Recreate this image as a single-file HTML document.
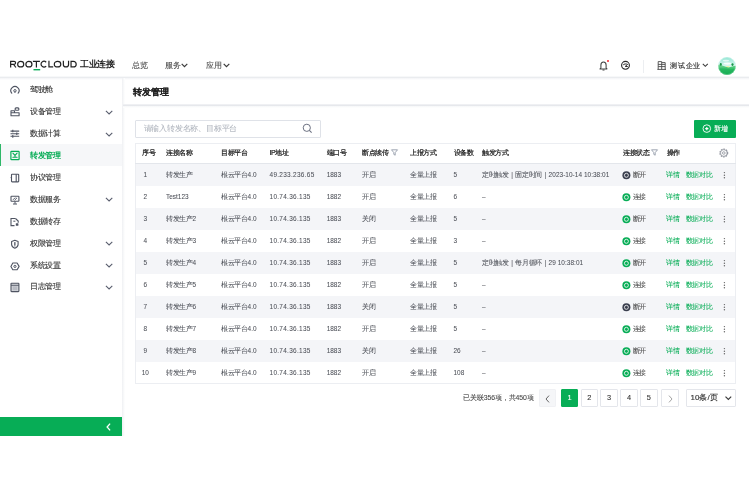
<!DOCTYPE html>
<html><head><meta charset="utf-8"><style>
*{box-sizing:border-box;margin:0;padding:0}
html,body{width:749px;height:499px;overflow:hidden;background:#fff;font-family:"Liberation Sans",sans-serif;color:#333}
div{position:absolute;white-space:nowrap}
.c{letter-spacing:-0.35px;font-size:7px}
svg{position:absolute;overflow:visible}
.nav{font-size:8px;letter-spacing:-0.45px;color:#4a4a4a;-webkit-text-stroke:0.1px;line-height:10px}
.mi{font-size:8px;letter-spacing:-0.4px;color:#333;-webkit-text-stroke:0.12px;line-height:10px;left:30px}
.th{font-size:7px;letter-spacing:-0.4px;color:#1f1f1f;-webkit-text-stroke:0.22px;line-height:10px}
.td{font-size:6.45px;color:#4d5058;-webkit-text-stroke:0.05px;line-height:10px}
.ip{letter-spacing:0.3px}
.trig{letter-spacing:0.05px}
.bar{margin-right:0.6px;margin-left:0.7px}
.pg{width:17.5px;height:17.4px;border:1px solid #e4e6eb;border-radius:1px;background:#fff;font-size:7.4px;-webkit-text-stroke:0.1px;color:#333;text-align:center;line-height:15.4px}
</style></head><body>
<div id="w" style="left:0;top:0;width:749px;height:499px;will-change:transform">
<div style="left:0;top:76px;width:749px;height:1px;background:#f7f8f9"></div>
<div style="left:0;top:77px;width:749px;height:1px;background:#eaecef"></div>
<div style="left:0;top:78px;width:749px;height:2px;background:linear-gradient(#f3f4f6,#fff)"></div>
<svg style="left:8px;top:58px" width="72" height="14" viewBox="0 0 72 14"><g fill="none" stroke="#222" stroke-width="1.2"><path d="M2.65 9.5 V3.35 H6.1 A1.475 1.475 0 0 1 6.1 6.3 H2.65 M5.6 6.3 L7.9 9.5"/><ellipse cx="12.7" cy="6.15" rx="3.05" ry="2.8"/><ellipse cx="20.9" cy="6.15" rx="3.05" ry="2.8"/><path d="M24.9 3.35 H31.9 M28.4 3.35 V9.5"/><path d="M38.2 4.2 A3.0 2.8 0 1 0 38.2 8.1"/><path d="M40.95 2.8 V8.95 H45.2"/><ellipse cx="49.55" cy="6.15" rx="3.25" ry="2.8"/><path d="M55.35 2.8 V6.4 A2.6 2.55 0 0 0 60.55 6.4 V2.8"/><path d="M63.05 3.35 V8.95 H65.4 A2.8 2.8 0 0 0 65.4 3.35 Z"/></g><rect x="25.5" y="11" width="6.7" height="1.4" fill="#07ad56"/></svg>
<div style="left:80px;top:59px;font-size:8.6px;letter-spacing:-0.3px;line-height:10px;color:#1a1a1a;font-weight:bold">工业连接</div>
<div class="nav" style="left:132px;top:61px">总览</div>
<div class="nav" style="left:165px;top:61px">服务</div>
<svg style="left:181px;top:62.8px" width="7" height="5" viewBox="0 0 7 5"><path d="M0.7 0.9 L3.5 3.7 L6.3 0.9" fill="none" stroke="#3a3a3a" stroke-width="1.2"/></svg>
<div class="nav" style="left:206px;top:61px">应用</div>
<svg style="left:222.5px;top:62.8px" width="7" height="5" viewBox="0 0 7 5"><path d="M0.7 0.9 L3.5 3.7 L6.3 0.9" fill="none" stroke="#3a3a3a" stroke-width="1.2"/></svg>
<svg style="left:599px;top:60.5px" width="9" height="10" viewBox="0 0 9 10"><path d="M1 7.9 L1.9 7 V4 C1.9 2.2 3 0.9 4.5 0.9 C6 0.9 7.1 2.2 7.1 4 V7 L8 7.9 Z" fill="none" stroke="#444" stroke-width="1.05" stroke-linejoin="round"/><path d="M3.5 9 H5.5" stroke="#444" stroke-width="1"/></svg>
<div style="left:606.8px;top:60px;width:2.2px;height:2.2px;border-radius:50%;background:#f5222d"></div>
<svg style="left:621px;top:61px" width="9" height="9" viewBox="0 0 9 9"><circle cx="4.5" cy="4.3" r="3.9" fill="none" stroke="#2a2a2a" stroke-width="1.15"/><path d="M2.2 3.9 C3 2.9 5.2 2.6 6.6 3.4" fill="none" stroke="#2a2a2a" stroke-width="1"/><path d="M6.6 3.4 L4.2 5.4 L6.8 5.6" fill="none" stroke="#2a2a2a" stroke-width="1"/></svg>
<div style="left:643px;top:59.5px;width:1px;height:13px;background:#eceef1"></div>
<svg style="left:656.5px;top:61px" width="10" height="10" viewBox="0 0 10 10"><path d="M0.4 8.4 H9 M1.2 8.4 V0.6 H4.7 V8.4 M4.7 1.6 H8.2 V8.4 M1.2 3.4 H8.2 M1.2 5.6 H8.2" fill="none" stroke="#4a4a4a" stroke-width="0.9"/></svg>
<div class="nav" style="left:670px;top:60.5px;color:#333;font-size:7px;letter-spacing:0.75px;-webkit-text-stroke:0.15px">测试企业</div>
<svg style="left:701.5px;top:63.3px" width="7" height="5" viewBox="0 0 7 5"><path d="M0.8 0.9 L3.3 3.3 L5.8 0.9" fill="none" stroke="#3a3a3a" stroke-width="1.1"/></svg>
<svg style="left:718px;top:56.8px" width="18" height="18" viewBox="0 0 18 18"><defs><clipPath id="ac"><circle cx="9" cy="9" r="8.9"/></clipPath><linearGradient id="sky" x1="0" y1="0" x2="0" y2="1"><stop offset="0" stop-color="#93e6d4"/><stop offset="0.5" stop-color="#d6f6ee"/></linearGradient><linearGradient id="hill" x1="0" y1="0" x2="0" y2="1"><stop offset="0" stop-color="#7ad99a"/><stop offset="0.35" stop-color="#3cc46e"/><stop offset="1" stop-color="#10a84e"/></linearGradient></defs><g clip-path="url(#ac)"><rect width="18" height="18" fill="url(#sky)"/><ellipse cx="8" cy="3.6" rx="3.2" ry="0.9" fill="#fff" opacity="0.65"/><ellipse cx="9.5" cy="6.6" rx="4" ry="1.1" fill="#fff" opacity="0.85"/><ellipse cx="9.8" cy="10" rx="2" ry="1" fill="#eef0a0"/><path d="M0 7.8 C3 7.3 6 9.5 9.5 10.3 C12.5 10.9 15 8.6 18 8.8 V18 H0 Z" fill="url(#hill)"/><path d="M0 12 C5 10.6 10 13.5 18 11.5 V18 H0Z" fill="#1bb158" opacity="0.55"/><ellipse cx="2.8" cy="7.4" rx="1" ry="1.3" fill="#179646"/><ellipse cx="14.5" cy="7.6" rx="1.1" ry="1.4" fill="#179646"/></g><circle cx="9" cy="9" r="8.6" fill="none" stroke="#fff" stroke-width="0.5" opacity="0.5"/></svg>
<div style="left:122px;top:78px;width:3px;height:358px;background:linear-gradient(90deg,#eff0f3,#f7f8f9 50%,#fff)"></div>
<div class="mi" style="top:84.9px">驾驶舱</div>
<svg style="left:9.5px;top:85.9px" width="10" height="10" viewBox="0 0 10 10"><path d="M1.75 7.2 A4.1 4.1 0 1 1 8.15 7.2" fill="none" stroke="#4f5462" stroke-width="1.1" stroke-linecap="round"/><circle cx="4.95" cy="4.75" r="1.2" fill="none" stroke="#4f5462" stroke-width="1"/><path d="M4.95 5.9 V6.9" stroke="#4f5462" stroke-width="0.9"/></svg>
<div class="mi" style="top:106.9px">设备管理</div>
<svg style="left:9.5px;top:107.9px" width="10" height="10" viewBox="0 0 10 10"><path d="M1 7.8 V2.8 H4.5 V4.8 H9.1 V7.8 Z M1 4.8 H4.5" fill="none" stroke="#4f5462" stroke-width="1.1" stroke-linejoin="round"/><rect x="5.1" y="-0.1" width="3.8" height="2.3" rx="1" fill="none" stroke="#4f5462" stroke-width="1.1"/></svg>
<svg style="left:104.5px;top:109.5px" width="8" height="5" viewBox="0 0 8 5"><path d="M0.9 0.8 L4.1 3.9 L7.3 0.8" fill="none" stroke="#5a5e6e" stroke-width="1.1"/></svg>
<div class="mi" style="top:128.8px">数据计算</div>
<svg style="left:9.5px;top:129.8px" width="10" height="10" viewBox="0 0 10 10"><path d="M0.5 1.1 H9.2 M0.5 3.8 H9.2 M0.5 6.3 H9.2 M2.8 -0.2 V2.3 M6.8 2.6 V5 M2.8 5 V7.8" fill="none" stroke="#4f5462" stroke-width="1.1"/></svg>
<svg style="left:104.5px;top:131.5px" width="8" height="5" viewBox="0 0 8 5"><path d="M0.9 0.8 L4.1 3.9 L7.3 0.8" fill="none" stroke="#5a5e6e" stroke-width="1.1"/></svg>
<div style="left:0;top:144px;width:122px;height:22px;background:#f6f7f9"></div>
<div style="left:0;top:144px;width:1.3px;height:22px;background:#2fb768"></div>
<div class="mi" style="top:150.7px;color:#07ad56;font-weight:bold;-webkit-text-stroke:0">转发管理</div>
<svg style="left:9.5px;top:151.7px" width="10" height="10" viewBox="0 0 10 10"><rect x="0.9" y="-0.7" width="8.2" height="8.3" rx="0.6" fill="none" stroke="#07ad56" stroke-width="1.2"/><path d="M2.9 1.2 L5 3.4 L7.1 1.2 M5 3.4 V4.6 M2.9 5.3 H7.1" fill="none" stroke="#07ad56" stroke-width="1.1" stroke-linecap="round"/></svg>
<div class="mi" style="top:172.7px">协议管理</div>
<svg style="left:9.5px;top:173.7px" width="10" height="10" viewBox="0 0 10 10"><rect x="1.5" y="0.2" width="7.2" height="7.7" rx="0.6" fill="none" stroke="#4f5462" stroke-width="1.1"/><path d="M6.2 0.2 V7.9" stroke="#4f5462" stroke-width="1.1"/><path d="M0.6 3.6 H1.8" stroke="#4f5462" stroke-width="0.9"/></svg>
<div class="mi" style="top:194.7px">数据服务</div>
<svg style="left:9.5px;top:195.7px" width="10" height="10" viewBox="0 0 10 10"><rect x="1" y="0.3" width="7.9" height="5" rx="0.5" fill="none" stroke="#4f5462" stroke-width="1.1"/><path d="M3 3.8 L5.2 1.6 M4.6 4.2 L7 1.8 M5 5.3 V7.8 M3 8 H7" fill="none" stroke="#4f5462" stroke-width="1"/></svg>
<svg style="left:104.5px;top:197.3px" width="8" height="5" viewBox="0 0 8 5"><path d="M0.9 0.8 L4.1 3.9 L7.3 0.8" fill="none" stroke="#5a5e6e" stroke-width="1.1"/></svg>
<div class="mi" style="top:216.6px">数据转存</div>
<svg style="left:9.5px;top:217.6px" width="10" height="10" viewBox="0 0 10 10"><path d="M5.5 0.5 H1 V7.6 H4.5" fill="none" stroke="#4f5462" stroke-width="1.1"/><path d="M5.5 0.5 L8.2 3.1 V4.8" fill="none" stroke="#4f5462" stroke-width="1.1"/><path d="M3.3 3.2 H5.4" stroke="#4f5462" stroke-width="1"/><rect x="5.8" y="5.2" width="2.6" height="2.6" rx="0.6" fill="#4f5462"/></svg>
<div class="mi" style="top:238.5px">权限管理</div>
<svg style="left:9.5px;top:239.5px" width="10" height="10" viewBox="0 0 10 10"><path d="M4.85 0.2 L8.1 1.5 V4.6 C8.1 6.4 6.7 7.6 4.85 8.2 C3 7.6 1.6 6.4 1.6 4.6 V1.5 Z" fill="none" stroke="#4f5462" stroke-width="1.1" stroke-linejoin="round"/><path d="M4.85 2.6 V5" stroke="#4f5462" stroke-width="1.3" stroke-linecap="round"/><circle cx="4.85" cy="6" r="0.55" fill="#4f5462"/></svg>
<svg style="left:104.5px;top:241.2px" width="8" height="5" viewBox="0 0 8 5"><path d="M0.9 0.8 L4.1 3.9 L7.3 0.8" fill="none" stroke="#5a5e6e" stroke-width="1.1"/></svg>
<div class="mi" style="top:260.5px">系统设置</div>
<svg style="left:9.5px;top:261.5px" width="10" height="10" viewBox="0 0 10 10"><path d="M2.8 1 H7.1 L9.1 4.4 L7.1 7.8 H2.8 L0.9 4.4 Z" fill="none" stroke="#4f5462" stroke-width="1.1" stroke-linejoin="round"/><circle cx="4.95" cy="4.4" r="1.1" fill="none" stroke="#4f5462" stroke-width="1"/></svg>
<svg style="left:104.5px;top:263.2px" width="8" height="5" viewBox="0 0 8 5"><path d="M0.9 0.8 L4.1 3.9 L7.3 0.8" fill="none" stroke="#5a5e6e" stroke-width="1.1"/></svg>
<div class="mi" style="top:282.4px">日志管理</div>
<svg style="left:9.5px;top:283.4px" width="10" height="10" viewBox="0 0 10 10"><rect x="1" y="0.3" width="7.9" height="8.3" rx="0.6" fill="#d5d7dc" stroke="#4f5462" stroke-width="1.1"/><path d="M1 2.3 H8.9" stroke="#4f5462" stroke-width="0.9"/><rect x="2.6" y="3.3" width="4.7" height="4" fill="#b9bcc4"/></svg>
<svg style="left:104.5px;top:285.1px" width="8" height="5" viewBox="0 0 8 5"><path d="M0.9 0.8 L4.1 3.9 L7.3 0.8" fill="none" stroke="#5a5e6e" stroke-width="1.1"/></svg>
<div style="left:0;top:417px;width:122px;height:19px;background:#07ad56"></div>
<svg style="left:106px;top:423px" width="5" height="8" viewBox="0 0 5 8"><path d="M4.1 0.6 L1.1 4 L4.1 7.4" fill="none" stroke="#fff" stroke-width="1.3"/></svg>
<div style="left:133.3px;top:86.5px;font-size:8.9px;line-height:10px;font-weight:bold;color:#1f1f1f;-webkit-text-stroke:0.1px">转发管理</div>
<div style="left:123px;top:104px;width:626px;height:1px;background:#eff0f3"></div>
<div style="left:123px;top:105px;width:626px;height:1px;background:#e6e8ec"></div>
<div style="left:123px;top:106px;width:626px;height:2px;background:linear-gradient(#f5f6f8,#fff)"></div>
<div style="left:135px;top:120px;width:185.5px;height:17.5px;border:1px solid #dfe2e8;border-radius:1px"></div>
<div style="left:143.6px;top:123.6px;font-size:8px;letter-spacing:-0.2px;line-height:10px;color:#aeb3bc;-webkit-text-stroke:0.05px">请输入转发名称、目标平台</div>
<svg style="left:302px;top:123px" width="11" height="11" viewBox="0 0 11 11"><circle cx="4.8" cy="4.8" r="3.6" fill="none" stroke="#6b7080" stroke-width="1"/><path d="M7.4 7.4 L9.6 9.6" stroke="#6b7080" stroke-width="1.1"/></svg>
<div style="left:694px;top:120px;width:42px;height:17.5px;background:#07ad56;border-radius:1px"></div>
<svg style="left:702px;top:124.3px" width="10" height="10" viewBox="0 0 10 10"><circle cx="4.8" cy="4.6" r="3.8" fill="none" stroke="#fff" stroke-width="0.9"/><path d="M4.8 3 V6.2 M3.2 4.6 H6.4" stroke="#fff" stroke-width="1.1"/></svg>
<div style="left:714px;top:123.8px;font-size:7px;letter-spacing:-0.3px;line-height:10px;color:#fff;-webkit-text-stroke:0.1px">新增</div>
<div style="left:135px;top:143px;width:601px;height:241px;border:1px solid #eceef2"></div>
<div style="left:135px;top:163px;width:601px;height:1px;background:#e3e6eb"></div>
<div style="left:136px;top:163.5px;width:599px;height:22px;background:#f4f5f8"></div>
<div style="left:136px;top:207.5px;width:599px;height:22px;background:#f4f5f8"></div>
<div style="left:136px;top:251.5px;width:599px;height:22px;background:#f4f5f8"></div>
<div style="left:136px;top:295.5px;width:599px;height:22px;background:#f4f5f8"></div>
<div style="left:136px;top:339.5px;width:599px;height:22px;background:#f4f5f8"></div>
<div class="th" style="left:142px;top:148px">序号</div>
<div class="th" style="left:166px;top:148px">连接名称</div>
<div class="th" style="left:221px;top:148px">目标平台</div>
<div class="th" style="left:269.5px;top:148px">IP地址</div>
<div class="th" style="left:326.7px;top:148px">端口号</div>
<div class="th" style="left:362.2px;top:148px">断点续传</div>
<div class="th" style="left:410px;top:148px">上报方式</div>
<div class="th" style="left:453.5px;top:148px">设备数</div>
<div class="th" style="left:482px;top:148px">触发方式</div>
<div class="th" style="left:623px;top:148px">连接状态</div>
<div class="th" style="left:666.6px;top:148px">操作</div>
<svg style="left:390.8px;top:149px" width="7" height="7" viewBox="0 0 7 7"><path d="M0.5 0.8 H6.5 L4.2 3.6 V6.2 L2.8 5.4 V3.6 Z" fill="none" stroke="#8890a0" stroke-width="0.8" stroke-linejoin="round"/></svg>
<svg style="left:651px;top:149px" width="7" height="7" viewBox="0 0 7 7"><path d="M0.5 0.8 H6.5 L4.2 3.6 V6.2 L2.8 5.4 V3.6 Z" fill="none" stroke="#8890a0" stroke-width="0.8" stroke-linejoin="round"/></svg>
<svg style="left:718.5px;top:148px" width="10" height="10" viewBox="0 0 10 10"><circle cx="4.8" cy="5" r="3.9" fill="none" stroke="#8d919b" stroke-width="1.1" stroke-dasharray="1.6 0.9"/><circle cx="4.8" cy="5" r="3.3" fill="none" stroke="#8d919b" stroke-width="0.7"/><circle cx="4.8" cy="5" r="1.3" fill="none" stroke="#8d919b" stroke-width="0.8"/></svg>
<div class="td" style="left:143.6px;top:169.5px">1</div>
<div class="td" style="left:166px;top:169.5px"><span class="c">转发生产</span></div>
<div class="td" style="left:221px;top:169.5px"><span class="c">根云平台</span>4.0</div>
<div class="td ip" style="left:269.5px;top:169.5px">49.233.236.65</div>
<div class="td" style="left:326.7px;top:169.5px">1883</div>
<div class="td" style="left:362.2px;top:169.5px"><span class="c">开启</span></div>
<div class="td" style="left:410px;top:169.5px"><span class="c">全量上报</span></div>
<div class="td" style="left:453.5px;top:169.5px">5</div>
<div class="td trig" style="left:482px;top:169.5px"><span class="c">定时触发</span> <span class="bar">|</span> <span class="c">固定时间</span> <span class="bar">|</span> 2023-10-14 10:38:01</div>
<svg style="left:622px;top:170.7px" width="9" height="9" viewBox="0 0 9 9"><circle cx="4.4" cy="4.3" r="4" fill="#3a3f4e"/><circle cx="4.4" cy="4.3" r="2" fill="none" stroke="#fff" stroke-width="0.8"/></svg>
<div class="td" style="left:632.8px;top:169.5px;color:#444"><span class="c">断开</span></div>
<div class="td" style="left:666.2px;top:169.5px;color:#07ad56;font-size:7px">详情</div>
<div class="td" style="left:685.8px;top:169.5px;color:#07ad56;font-size:7px;letter-spacing:-0.4px">数据对比</div>
<svg style="left:722.5px;top:170.5px" width="3" height="8" viewBox="0 0 3 8"><circle cx="1.4" cy="1.6" r="0.72" fill="#666"/><circle cx="1.4" cy="4.2" r="0.72" fill="#666"/><circle cx="1.4" cy="6.8" r="0.72" fill="#666"/></svg>
<div class="td" style="left:143.6px;top:191.5px">2</div>
<div class="td" style="left:166px;top:191.5px">Test123</div>
<div class="td" style="left:221px;top:191.5px"><span class="c">根云平台</span>4.0</div>
<div class="td ip" style="left:269.5px;top:191.5px">10.74.36.135</div>
<div class="td" style="left:326.7px;top:191.5px">1882</div>
<div class="td" style="left:362.2px;top:191.5px"><span class="c">开启</span></div>
<div class="td" style="left:410px;top:191.5px"><span class="c">全量上报</span></div>
<div class="td" style="left:453.5px;top:191.5px">6</div>
<div class="td" style="left:482px;top:191.5px">–</div>
<svg style="left:622px;top:192.7px" width="9" height="9" viewBox="0 0 9 9"><circle cx="4.4" cy="4.3" r="4" fill="#07ad56"/><circle cx="4.4" cy="4.3" r="2" fill="none" stroke="#fff" stroke-width="0.8"/></svg>
<div class="td" style="left:632.8px;top:191.5px;color:#444"><span class="c">连接</span></div>
<div class="td" style="left:666.2px;top:191.5px;color:#07ad56;font-size:7px">详情</div>
<div class="td" style="left:685.8px;top:191.5px;color:#07ad56;font-size:7px;letter-spacing:-0.4px">数据对比</div>
<svg style="left:722.5px;top:192.5px" width="3" height="8" viewBox="0 0 3 8"><circle cx="1.4" cy="1.6" r="0.72" fill="#666"/><circle cx="1.4" cy="4.2" r="0.72" fill="#666"/><circle cx="1.4" cy="6.8" r="0.72" fill="#666"/></svg>
<div class="td" style="left:143.6px;top:213.5px">3</div>
<div class="td" style="left:166px;top:213.5px"><span class="c">转发生产</span>2</div>
<div class="td" style="left:221px;top:213.5px"><span class="c">根云平台</span>4.0</div>
<div class="td ip" style="left:269.5px;top:213.5px">10.74.36.135</div>
<div class="td" style="left:326.7px;top:213.5px">1883</div>
<div class="td" style="left:362.2px;top:213.5px"><span class="c">关闭</span></div>
<div class="td" style="left:410px;top:213.5px"><span class="c">全量上报</span></div>
<div class="td" style="left:453.5px;top:213.5px">5</div>
<div class="td" style="left:482px;top:213.5px">–</div>
<svg style="left:622px;top:214.7px" width="9" height="9" viewBox="0 0 9 9"><circle cx="4.4" cy="4.3" r="4" fill="#07ad56"/><circle cx="4.4" cy="4.3" r="2" fill="none" stroke="#fff" stroke-width="0.8"/></svg>
<div class="td" style="left:632.8px;top:213.5px;color:#444"><span class="c">断开</span></div>
<div class="td" style="left:666.2px;top:213.5px;color:#07ad56;font-size:7px">详情</div>
<div class="td" style="left:685.8px;top:213.5px;color:#07ad56;font-size:7px;letter-spacing:-0.4px">数据对比</div>
<svg style="left:722.5px;top:214.5px" width="3" height="8" viewBox="0 0 3 8"><circle cx="1.4" cy="1.6" r="0.72" fill="#666"/><circle cx="1.4" cy="4.2" r="0.72" fill="#666"/><circle cx="1.4" cy="6.8" r="0.72" fill="#666"/></svg>
<div class="td" style="left:143.6px;top:235.5px">4</div>
<div class="td" style="left:166px;top:235.5px"><span class="c">转发生产</span>3</div>
<div class="td" style="left:221px;top:235.5px"><span class="c">根云平台</span>4.0</div>
<div class="td ip" style="left:269.5px;top:235.5px">10.74.36.135</div>
<div class="td" style="left:326.7px;top:235.5px">1882</div>
<div class="td" style="left:362.2px;top:235.5px"><span class="c">开启</span></div>
<div class="td" style="left:410px;top:235.5px"><span class="c">全量上报</span></div>
<div class="td" style="left:453.5px;top:235.5px">3</div>
<div class="td" style="left:482px;top:235.5px">–</div>
<svg style="left:622px;top:236.7px" width="9" height="9" viewBox="0 0 9 9"><circle cx="4.4" cy="4.3" r="4" fill="#07ad56"/><circle cx="4.4" cy="4.3" r="2" fill="none" stroke="#fff" stroke-width="0.8"/></svg>
<div class="td" style="left:632.8px;top:235.5px;color:#444"><span class="c">连接</span></div>
<div class="td" style="left:666.2px;top:235.5px;color:#07ad56;font-size:7px">详情</div>
<div class="td" style="left:685.8px;top:235.5px;color:#07ad56;font-size:7px;letter-spacing:-0.4px">数据对比</div>
<svg style="left:722.5px;top:236.5px" width="3" height="8" viewBox="0 0 3 8"><circle cx="1.4" cy="1.6" r="0.72" fill="#666"/><circle cx="1.4" cy="4.2" r="0.72" fill="#666"/><circle cx="1.4" cy="6.8" r="0.72" fill="#666"/></svg>
<div class="td" style="left:143.6px;top:257.5px">5</div>
<div class="td" style="left:166px;top:257.5px"><span class="c">转发生产</span>4</div>
<div class="td" style="left:221px;top:257.5px"><span class="c">根云平台</span>4.0</div>
<div class="td ip" style="left:269.5px;top:257.5px">10.74.36.135</div>
<div class="td" style="left:326.7px;top:257.5px">1883</div>
<div class="td" style="left:362.2px;top:257.5px"><span class="c">开启</span></div>
<div class="td" style="left:410px;top:257.5px"><span class="c">全量上报</span></div>
<div class="td" style="left:453.5px;top:257.5px">5</div>
<div class="td trig" style="left:482px;top:257.5px"><span class="c">定时触发</span> <span class="bar">|</span> <span class="c">每月循环</span> <span class="bar">|</span> 29 10:38:01</div>
<svg style="left:622px;top:258.7px" width="9" height="9" viewBox="0 0 9 9"><circle cx="4.4" cy="4.3" r="4" fill="#07ad56"/><circle cx="4.4" cy="4.3" r="2" fill="none" stroke="#fff" stroke-width="0.8"/></svg>
<div class="td" style="left:632.8px;top:257.5px;color:#444"><span class="c">断开</span></div>
<div class="td" style="left:666.2px;top:257.5px;color:#07ad56;font-size:7px">详情</div>
<div class="td" style="left:685.8px;top:257.5px;color:#07ad56;font-size:7px;letter-spacing:-0.4px">数据对比</div>
<svg style="left:722.5px;top:258.5px" width="3" height="8" viewBox="0 0 3 8"><circle cx="1.4" cy="1.6" r="0.72" fill="#666"/><circle cx="1.4" cy="4.2" r="0.72" fill="#666"/><circle cx="1.4" cy="6.8" r="0.72" fill="#666"/></svg>
<div class="td" style="left:143.6px;top:279.5px">6</div>
<div class="td" style="left:166px;top:279.5px"><span class="c">转发生产</span>5</div>
<div class="td" style="left:221px;top:279.5px"><span class="c">根云平台</span>4.0</div>
<div class="td ip" style="left:269.5px;top:279.5px">10.74.36.135</div>
<div class="td" style="left:326.7px;top:279.5px">1882</div>
<div class="td" style="left:362.2px;top:279.5px"><span class="c">开启</span></div>
<div class="td" style="left:410px;top:279.5px"><span class="c">全量上报</span></div>
<div class="td" style="left:453.5px;top:279.5px">5</div>
<div class="td" style="left:482px;top:279.5px">–</div>
<svg style="left:622px;top:280.7px" width="9" height="9" viewBox="0 0 9 9"><circle cx="4.4" cy="4.3" r="4" fill="#07ad56"/><circle cx="4.4" cy="4.3" r="2" fill="none" stroke="#fff" stroke-width="0.8"/></svg>
<div class="td" style="left:632.8px;top:279.5px;color:#444"><span class="c">连接</span></div>
<div class="td" style="left:666.2px;top:279.5px;color:#07ad56;font-size:7px">详情</div>
<div class="td" style="left:685.8px;top:279.5px;color:#07ad56;font-size:7px;letter-spacing:-0.4px">数据对比</div>
<svg style="left:722.5px;top:280.5px" width="3" height="8" viewBox="0 0 3 8"><circle cx="1.4" cy="1.6" r="0.72" fill="#666"/><circle cx="1.4" cy="4.2" r="0.72" fill="#666"/><circle cx="1.4" cy="6.8" r="0.72" fill="#666"/></svg>
<div class="td" style="left:143.6px;top:301.5px">7</div>
<div class="td" style="left:166px;top:301.5px"><span class="c">转发生产</span>6</div>
<div class="td" style="left:221px;top:301.5px"><span class="c">根云平台</span>4.0</div>
<div class="td ip" style="left:269.5px;top:301.5px">10.74.36.135</div>
<div class="td" style="left:326.7px;top:301.5px">1883</div>
<div class="td" style="left:362.2px;top:301.5px"><span class="c">关闭</span></div>
<div class="td" style="left:410px;top:301.5px"><span class="c">全量上报</span></div>
<div class="td" style="left:453.5px;top:301.5px">5</div>
<div class="td" style="left:482px;top:301.5px">–</div>
<svg style="left:622px;top:302.7px" width="9" height="9" viewBox="0 0 9 9"><circle cx="4.4" cy="4.3" r="4" fill="#3a3f4e"/><circle cx="4.4" cy="4.3" r="2" fill="none" stroke="#fff" stroke-width="0.8"/></svg>
<div class="td" style="left:632.8px;top:301.5px;color:#444"><span class="c">断开</span></div>
<div class="td" style="left:666.2px;top:301.5px;color:#07ad56;font-size:7px">详情</div>
<div class="td" style="left:685.8px;top:301.5px;color:#07ad56;font-size:7px;letter-spacing:-0.4px">数据对比</div>
<svg style="left:722.5px;top:302.5px" width="3" height="8" viewBox="0 0 3 8"><circle cx="1.4" cy="1.6" r="0.72" fill="#666"/><circle cx="1.4" cy="4.2" r="0.72" fill="#666"/><circle cx="1.4" cy="6.8" r="0.72" fill="#666"/></svg>
<div class="td" style="left:143.6px;top:323.5px">8</div>
<div class="td" style="left:166px;top:323.5px"><span class="c">转发生产</span>7</div>
<div class="td" style="left:221px;top:323.5px"><span class="c">根云平台</span>4.0</div>
<div class="td ip" style="left:269.5px;top:323.5px">10.74.36.135</div>
<div class="td" style="left:326.7px;top:323.5px">1882</div>
<div class="td" style="left:362.2px;top:323.5px"><span class="c">开启</span></div>
<div class="td" style="left:410px;top:323.5px"><span class="c">全量上报</span></div>
<div class="td" style="left:453.5px;top:323.5px">5</div>
<div class="td" style="left:482px;top:323.5px">–</div>
<svg style="left:622px;top:324.7px" width="9" height="9" viewBox="0 0 9 9"><circle cx="4.4" cy="4.3" r="4" fill="#07ad56"/><circle cx="4.4" cy="4.3" r="2" fill="none" stroke="#fff" stroke-width="0.8"/></svg>
<div class="td" style="left:632.8px;top:323.5px;color:#444"><span class="c">连接</span></div>
<div class="td" style="left:666.2px;top:323.5px;color:#07ad56;font-size:7px">详情</div>
<div class="td" style="left:685.8px;top:323.5px;color:#07ad56;font-size:7px;letter-spacing:-0.4px">数据对比</div>
<svg style="left:722.5px;top:324.5px" width="3" height="8" viewBox="0 0 3 8"><circle cx="1.4" cy="1.6" r="0.72" fill="#666"/><circle cx="1.4" cy="4.2" r="0.72" fill="#666"/><circle cx="1.4" cy="6.8" r="0.72" fill="#666"/></svg>
<div class="td" style="left:143.6px;top:345.5px">9</div>
<div class="td" style="left:166px;top:345.5px"><span class="c">转发生产</span>8</div>
<div class="td" style="left:221px;top:345.5px"><span class="c">根云平台</span>4.0</div>
<div class="td ip" style="left:269.5px;top:345.5px">10.74.36.135</div>
<div class="td" style="left:326.7px;top:345.5px">1883</div>
<div class="td" style="left:362.2px;top:345.5px"><span class="c">关闭</span></div>
<div class="td" style="left:410px;top:345.5px"><span class="c">全量上报</span></div>
<div class="td" style="left:453.5px;top:345.5px">26</div>
<div class="td" style="left:482px;top:345.5px">–</div>
<svg style="left:622px;top:346.7px" width="9" height="9" viewBox="0 0 9 9"><circle cx="4.4" cy="4.3" r="4" fill="#07ad56"/><circle cx="4.4" cy="4.3" r="2" fill="none" stroke="#fff" stroke-width="0.8"/></svg>
<div class="td" style="left:632.8px;top:345.5px;color:#444"><span class="c">断开</span></div>
<div class="td" style="left:666.2px;top:345.5px;color:#07ad56;font-size:7px">详情</div>
<div class="td" style="left:685.8px;top:345.5px;color:#07ad56;font-size:7px;letter-spacing:-0.4px">数据对比</div>
<svg style="left:722.5px;top:346.5px" width="3" height="8" viewBox="0 0 3 8"><circle cx="1.4" cy="1.6" r="0.72" fill="#666"/><circle cx="1.4" cy="4.2" r="0.72" fill="#666"/><circle cx="1.4" cy="6.8" r="0.72" fill="#666"/></svg>
<div class="td" style="left:141.7px;top:367.5px">10</div>
<div class="td" style="left:166px;top:367.5px"><span class="c">转发生产</span>9</div>
<div class="td" style="left:221px;top:367.5px"><span class="c">根云平台</span>4.0</div>
<div class="td ip" style="left:269.5px;top:367.5px">10.74.36.135</div>
<div class="td" style="left:326.7px;top:367.5px">1882</div>
<div class="td" style="left:362.2px;top:367.5px"><span class="c">开启</span></div>
<div class="td" style="left:410px;top:367.5px"><span class="c">全量上报</span></div>
<div class="td" style="left:453.5px;top:367.5px">108</div>
<div class="td" style="left:482px;top:367.5px">–</div>
<svg style="left:622px;top:368.7px" width="9" height="9" viewBox="0 0 9 9"><circle cx="4.4" cy="4.3" r="4" fill="#07ad56"/><circle cx="4.4" cy="4.3" r="2" fill="none" stroke="#fff" stroke-width="0.8"/></svg>
<div class="td" style="left:632.8px;top:367.5px;color:#444"><span class="c">连接</span></div>
<div class="td" style="left:666.2px;top:367.5px;color:#07ad56;font-size:7px">详情</div>
<div class="td" style="left:685.8px;top:367.5px;color:#07ad56;font-size:7px;letter-spacing:-0.4px">数据对比</div>
<svg style="left:722.5px;top:368.5px" width="3" height="8" viewBox="0 0 3 8"><circle cx="1.4" cy="1.6" r="0.72" fill="#666"/><circle cx="1.4" cy="4.2" r="0.72" fill="#666"/><circle cx="1.4" cy="6.8" r="0.72" fill="#666"/></svg>
<div style="left:463px;top:393px;font-size:6.9px;letter-spacing:-0.1px;line-height:10px;color:#4a4a4a;-webkit-text-stroke:0.1px">已关联356项，共450项</div>
<div class="pg" style="left:538.5px;top:389.3px;background:#f5f6f8;border-color:#f0f1f4"></div>
<svg style="left:545px;top:394.5px" width="5" height="8" viewBox="0 0 5 8"><path d="M4 0.6 L1 4 L4 7.4" fill="none" stroke="#555" stroke-width="0.9"/></svg>
<div class="pg" style="left:560.7px;top:389.3px;background:#07ad56;border-color:#07ad56;color:#fff">1</div>
<div class="pg" style="left:580.5px;top:389.3px">2</div>
<div class="pg" style="left:600.4px;top:389.3px">3</div>
<div class="pg" style="left:620.3px;top:389.3px">4</div>
<div class="pg" style="left:640.1px;top:389.3px">5</div>
<div class="pg" style="left:661.3px;top:389.3px"></div>
<svg style="left:668px;top:394.5px" width="5" height="8" viewBox="0 0 5 8"><path d="M1 0.6 L4 4 L1 7.4" fill="none" stroke="#999" stroke-width="0.9"/></svg>
<div class="pg" style="left:685.9px;top:389.3px;width:49.8px"></div>
<div style="left:690.5px;top:393px;-webkit-text-stroke:0.15px;font-size:8px;line-height:10px;color:#333">10条/页</div>
<svg style="left:724.6px;top:396px" width="8" height="5" viewBox="0 0 8 5"><path d="M0.5 0.7 L3.35 3.5 L6.2 0.7" fill="none" stroke="#3a3a3a" stroke-width="1.15"/></svg>
</div>
</body></html>
